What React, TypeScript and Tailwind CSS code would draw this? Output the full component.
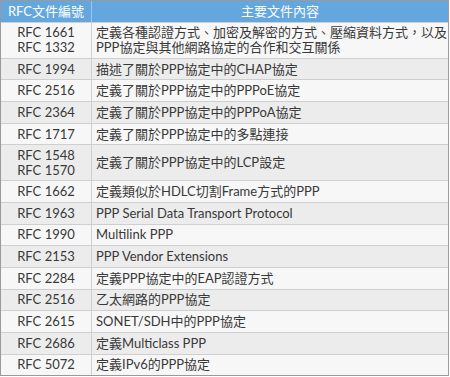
import React from "react";

const rows: { rfc: string[]; desc: string[] }[] = [
  { rfc: ["RFC 1661", "RFC 1332"], desc: ["定義各種認證方式、加密及解密的方式、壓縮資料方式，以及", "PPP協定與其他網路協定的合作和交互關係"] },
  { rfc: ["RFC 1994"], desc: ["描述了關於PPP協定中的CHAP協定"] },
  { rfc: ["RFC 2516"], desc: ["定義了關於PPP協定中的PPPoE協定"] },
  { rfc: ["RFC 2364"], desc: ["定義了關於PPP協定中的PPPoA協定"] },
  { rfc: ["RFC 1717"], desc: ["定義了關於PPP協定中的多點連接"] },
  { rfc: ["RFC 1548", "RFC 1570"], desc: ["定義了關於PPP協定中的LCP設定"] },
  { rfc: ["RFC 1662"], desc: ["定義類似於HDLC切割Frame方式的PPP"] },
  { rfc: ["RFC 1963"], desc: ["PPP Serial Data Transport Protocol"] },
  { rfc: ["RFC 1990"], desc: ["Multilink PPP"] },
  { rfc: ["RFC 2153"], desc: ["PPP Vendor Extensions"] },
  { rfc: ["RFC 2284"], desc: ["定義PPP協定中的EAP認證方式"] },
  { rfc: ["RFC 2516"], desc: ["乙太網路的PPP協定"] },
  { rfc: ["RFC 2615"], desc: ["SONET/SDH中的PPP協定"] },
  { rfc: ["RFC 2686"], desc: ["定義Multiclass PPP"] },
  { rfc: ["RFC 5072"], desc: ["定義IPv6的PPP協定"] },
];

export default function App() {
  return (
    <div
      className="w-[450px] h-[377px] bg-white"
      style={{ fontFamily: 'Lato, "Noto Sans CJK TC", sans-serif' }}
    >
      <div className="w-[449px] border border-[#9a9a9a] text-[13px] leading-[15px] text-[#383838]">
        <div className="flex h-[21px] bg-[#63a7de] text-white">
          <div className="w-[91px] flex items-center justify-center border-r border-[#9cc6ea]">RFC文件編號</div>
          <div className="flex-1 flex items-center justify-center pl-[20px]">主要文件內容</div>
        </div>
        {rows.map((r, i) => {
          const dbl = r.rfc.length > 1 || r.desc.length > 1;
          const pad = dbl ? "py-[2.35px]" : "py-[2.85px]";
          return (
            <div
              key={i}
              className={`flex border-t border-[#cfcfcf] ${i % 2 === 0 ? "bg-[#f7f7f7]" : "bg-[#ececec]"}`}
            >
              <div className={`w-[91px] shrink-0 flex flex-col items-center justify-center border-r border-[#cfcfcf] ${pad}`}>
                {r.rfc.map((t, j) => (
                  <div key={j}>{t}</div>
                ))}
              </div>
              <div className={`flex-1 flex flex-col justify-center pl-[4px] whitespace-nowrap ${pad}`}>
                {r.desc.map((t, j) => (
                  <div key={j}>{t}</div>
                ))}
              </div>
            </div>
          );
        })}
      </div>
    </div>
  );
}
